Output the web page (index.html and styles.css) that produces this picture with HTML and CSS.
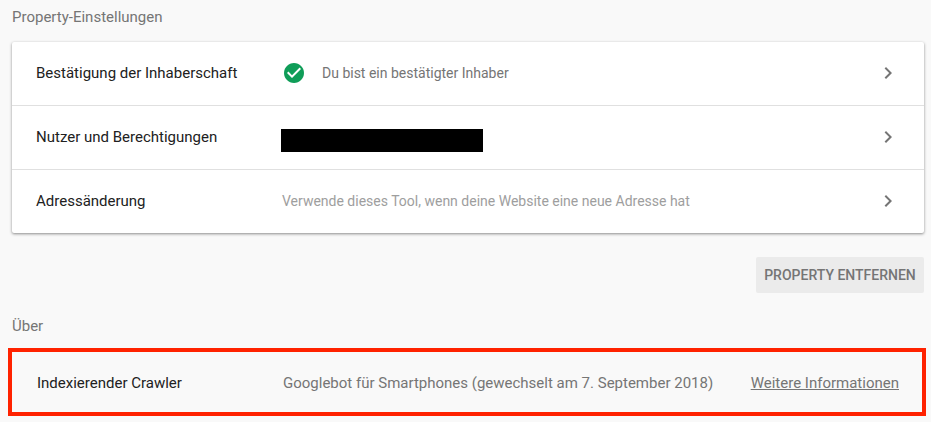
FILE: index.html
```html
<!DOCTYPE html>
<html lang="de">
    <head>
        <meta charset="UTF-8">
        <meta name="viewport" content="width=device-width, initial-scale=1.0">
        <title>Property-Einstellungen</title>
        <link rel="stylesheet" href="styles.css">
    </head>
    <body>
        <h2 class="titel">Property-Einstellungen</h2>

        <div class="karte">
            <div class="zeile">
                <div class="name">Bestätigung der Inhaberschaft</div>
                <div class="wert wert-status">
                    <svg class="haken" width="24" height="24" viewBox="0 0 24 24">
                        <path fill="#0f9d58" d="M12 2C6.48 2 2 6.48 2 12s4.48 10 10 10 10-4.48 10-10S17.52 2 12 2z"/>
                        <path fill="#fff" d="M10 17l-5-5 1.41-1.41L10 14.17l7.59-7.59L19 8l-9 9z"/>
                    </svg>
                    <span>Du bist ein bestätigter Inhaber</span>
                </div>
                <svg class="pfeil" width="24" height="24" viewBox="0 0 24 24"><path d="M10 6L8.59 7.41 13.17 12l-4.58 4.59L10 18l6-6z"/></svg>
            </div>
            <div class="zeile">
                <div class="name">Nutzer und Berechtigungen</div>
                <div class="wert"><div class="geschwaerzt"></div></div>
                <svg class="pfeil" width="24" height="24" viewBox="0 0 24 24"><path d="M10 6L8.59 7.41 13.17 12l-4.58 4.59L10 18l6-6z"/></svg>
            </div>
            <div class="zeile">
                <div class="name">Adressänderung</div>
                <div class="wert wert-hell">Verwende dieses Tool, wenn deine Website eine neue Adresse hat</div>
                <svg class="pfeil" width="24" height="24" viewBox="0 0 24 24"><path d="M10 6L8.59 7.41 13.17 12l-4.58 4.59L10 18l6-6z"/></svg>
            </div>
        </div>

        <div class="aktionen">
            <button class="boton-entfernen">PROPERTY ENTFERNEN</button>
        </div>

        <h2 class="titel titel-ueber">Über</h2>

        <!-- Roter Rahmen um den Crawler -->
        <div class="crawler">
            <div class="name">Indexierender Crawler</div>
            <div class="wert">Googlebot für Smartphones (gewechselt am 7. September 2018)</div>
            <a class="mehr" href="#">Weitere Informationen</a>
        </div>
    </body>
</html>
```

FILE: styles.css
```css
body {
    font-family: Roboto, Arial, sans-serif;
    background-color: #f9f9f9;
    margin: 0;
    height: 422px;
    overflow: hidden;
}
.titel {
    font-size: 15px;
    line-height: 20px;
    font-weight: 400;
    color: #757575;
    margin: 0;
    padding: 7px 12px 0;
}
.karte {
    margin: 15px 7px 0 12px;
    background-color: white;
    border-radius: 2px;
    box-shadow: 0 1px 3px rgba(0,0,0,0.45);
}
.zeile {
    display: flex;
    align-items: center;
    box-sizing: content-box;
    height: 61px;
    padding: 0 24px 2px;
    border-bottom: 1px solid #e0e0e0;
}
.zeile:last-child {
    border-bottom: none;
}
.name {
    width: 246px;
    flex-shrink: 0;
    font-size: 15px;
    color: #212121;
}
.wert {
    flex: 1;
    font-size: 14px;
    color: #757575;
}
.wert-status {
    display: flex;
    align-items: center;
    gap: 16px;
}
.wert-hell {
    color: #9e9e9e;
}
.haken {
    flex-shrink: 0;
}
.geschwaerzt {
    width: 202px;
    height: 23px;
    margin: 8px 0 0 -1px;
    background-color: black;
}
.pfeil {
    fill: #757575;
}
.aktionen {
    display: flex;
    justify-content: flex-end;
    margin: 24px 7px 0 0;
}
.boton-entfernen {
    font-family: Roboto, Arial, sans-serif;
    font-size: 14px;
    font-weight: 500;
    color: #757575;
    background-color: #ebebeb;
    border: none;
    border-radius: 2px;
    height: 36px;
    width: 168px;
    padding: 0;
}
.titel-ueber {
    padding-top: 23px;
}
.crawler {
    display: flex;
    align-items: center;
    box-sizing: border-box;
    height: 68px;
    margin: 12px 5px 0 8px;
    padding: 2px 23px 0 25px;
    border: 4px solid #ff2200;
}
.crawler .wert {
    font-size: 15px;
}
.mehr {
    font-size: 15px;
    color: #757575;
}
```
